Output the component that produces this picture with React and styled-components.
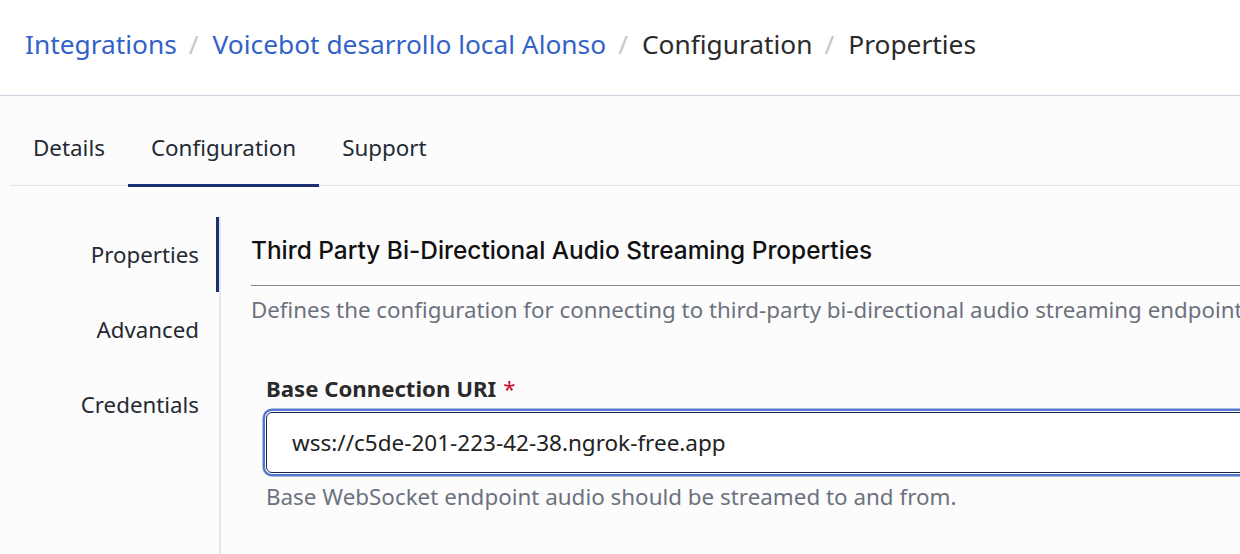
import React from "react";
import styled, { createGlobalStyle } from "styled-components";

const Global = createGlobalStyle`
  html, body { margin: 0; padding: 0; }
  body {
    background: #fcfcfd;
    font-family: "Noto Sans", "Open Sans", sans-serif;
    color: #222;
    overflow: hidden;
    width: 1240px;
    height: 554px;
  }
`;

const Page = styled.div`
  width: 1240px;
  height: 554px;
  overflow: hidden;
  display: flex;
  flex-direction: column;
`;

const Header = styled.header`
  flex: none;
  background: #ffffff;
  border-bottom: 1px solid #c9d1de;
  display: flex;
  align-items: center;
  padding-left: 25px;
  box-sizing: border-box;
  height: 96px;
`;

const Crumbs = styled.nav`
  display: flex;
  align-items: center;
  font-size: 26.3px;
  line-height: 34px;
  margin-top: -8px;
`;

const Crumb = styled.span`
  color: ${(p) => (p.$link ? "#3262c9" : "#2a2a2a")};
  white-space: nowrap;
`;

const Sep = styled.span`
  color: #c4c7cc;
  margin: 0 14px 0 12px;
`;

const Body = styled.div`
  flex: 1;
  display: flex;
  flex-direction: column;
  padding-left: 10px;
  width: 1600px;
`;

const Tabs = styled.div`
  display: flex;
  height: 90px;
  border-bottom: 1px solid #dde2ee;
  box-sizing: border-box;
`;

const Tab = styled.div`
  padding: 15px 23px 0;
  display: flex;
  align-items: center;
  font-size: 22.4px;
  color: #242a33;
  border-bottom: 3px solid ${(p) => (p.$active ? "#1d2f73" : "transparent")};
  margin-bottom: -2px;
  box-sizing: border-box;
`;

const Main = styled.div`
  display: flex;
  flex: 1;
  padding-top: 31px;
`;

const SideNav = styled.div`
  width: 209px;
  flex: none;
  display: flex;
  flex-direction: column;
`;

const NavItem = styled.div`
  height: 75px;
  display: flex;
  align-items: center;
  justify-content: flex-end;
  padding-right: 17px;
  box-sizing: border-box;
  font-size: 22.3px;
  color: #242a33;
  border-right: 3px solid ${(p) => (p.$active ? "#1d2f73" : "transparent")};
`;

const Content = styled.section`
  flex: 1;
  border-left: 2px solid #e2e6f3;
  padding: 17px 0 0 30px;
`;

const Heading = styled.h2`
  margin: 0;
  font-family: "Inter", "Lato", sans-serif;
  font-weight: 500;
  font-size: 24.4px;
  line-height: 32px;
  color: #111;
  padding-bottom: 19px;
  border-bottom: 1px solid #8a8a8a;
`;

const Description = styled.p`
  margin: 10px 0 0;
  font-size: 22.3px;
  line-height: 28px;
  color: #6c727d;
  white-space: nowrap;
`;

const Field = styled.div`
  margin-top: 51px;
  padding-left: 15px;
  display: flex;
  flex-direction: column;
`;

const Label = styled.label`
  font-size: 22.2px;
  line-height: 28px;
  font-weight: 700;
  color: #2a2a2a;
`;

const Req = styled.span`
  color: #c8102e;
  margin-left: 7px;
  font-weight: 400;
`;

const Input = styled.input`
  margin: 9px 0 0 0;
  height: 61px;
  width: 1200px;
  box-sizing: border-box;
  border: 1px solid #1a2550;
  border-radius: 6px;
  background: #fff;
  box-shadow: 0 0 0 1px #fff, 0 0 0 3.5px #5577cf;
  padding: 0 25px;
  font-family: "Noto Sans", sans-serif;
  font-size: 22.5px;
  color: #222;
  outline: none;
`;

const Help = styled.div`
  margin-top: 10px;
  font-size: 22.4px;
  line-height: 28px;
  color: #6c727d;
`;

export default function App() {
  return (
    <Page>
      <Global />
      <Header>
        <Crumbs>
          <Crumb $link>Integrations</Crumb>
          <Sep>/</Sep>
          <Crumb $link>Voicebot desarrollo local Alonso</Crumb>
          <Sep>/</Sep>
          <Crumb>Configuration</Crumb>
          <Sep>/</Sep>
          <Crumb>Properties</Crumb>
        </Crumbs>
      </Header>
      <Body>
        <Tabs>
          <Tab>Details</Tab>
          <Tab $active>Configuration</Tab>
          <Tab>Support</Tab>
        </Tabs>
        <Main>
          <SideNav>
            <NavItem $active>Properties</NavItem>
            <NavItem>Advanced</NavItem>
            <NavItem>Credentials</NavItem>
          </SideNav>
          <Content>
            <Heading>Third Party Bi-Directional Audio Streaming Properties</Heading>
            <Description>
              Defines the configuration for connecting to third-party bi-directional audio streaming endpoints.
            </Description>
            <Field>
              <Label>
                Base Connection URI<Req>*</Req>
              </Label>
              <Input readOnly value="wss://c5de-201-223-42-38.ngrok-free.app" />
              <Help>Base WebSocket endpoint audio should be streamed to and from.</Help>
            </Field>
          </Content>
        </Main>
      </Body>
    </Page>
  );
}
